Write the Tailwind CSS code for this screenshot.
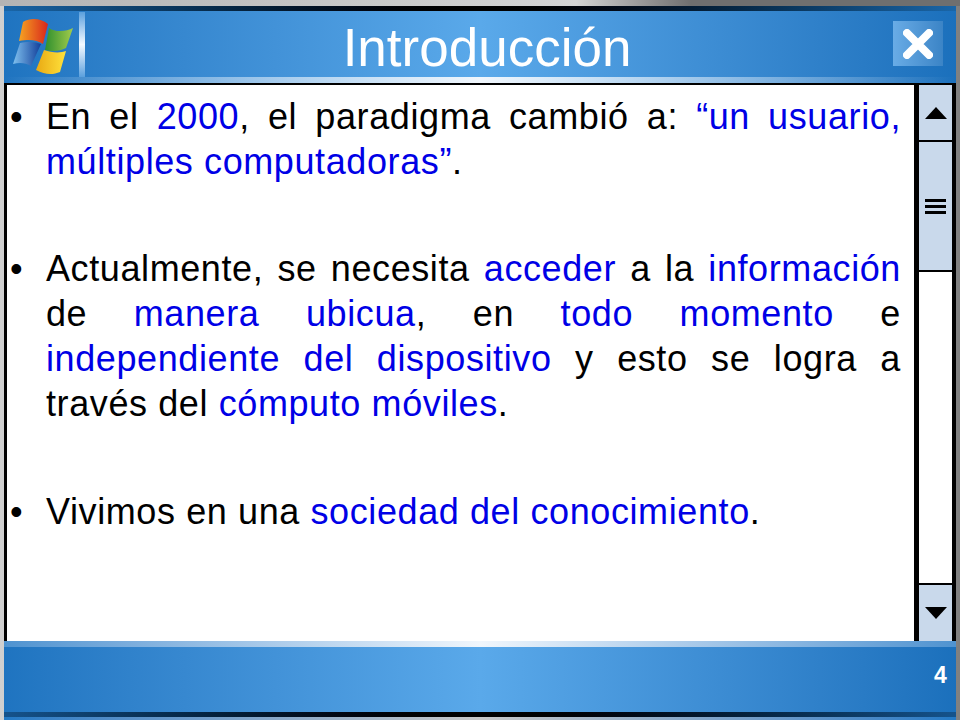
<!DOCTYPE html>
<html><head><meta charset="utf-8"><script src="https://cdn.jsdelivr.net/npm/@tailwindcss/browser@4"></script></head>
<body class="m-0">
<div class="w-[960px] h-[720px] overflow-hidden flex flex-col font-['Liberation_Sans',Arial,sans-serif] bg-gradient-to-r from-[#d0d0d0] to-[#808080] pl-[4px] pr-[4px]">
  <div class="h-[6px] shrink-0 -mx-[4px] bg-gradient-to-r from-[#b4b4b4] via-[#d4d4d4] via-[60%] to-[#6f6f6f] to-[72%]"></div>
  <header class="h-[77px] shrink-0 relative flex items-center justify-center bg-gradient-to-r from-[#1f74c0] via-[#5aa9ea] to-[#1b70bc]">
    <div class="absolute top-0 left-0 right-0 h-[5px] bg-gradient-to-r from-[#1a66a8] via-black to-[#1a66a8]"></div>
    <div class="absolute bottom-0 left-0 right-0 h-[6px] bg-gradient-to-r from-transparent via-[#f0f6fc] to-transparent"></div>
    <svg class="absolute left-[-3px] top-[-3px] overflow-visible" width="80" height="72" viewBox="0 0 80 72">
      <defs>
        <linearGradient id="r" x1="0" y1="0" x2="1" y2="0"><stop offset="0" stop-color="#f6a321"/><stop offset="1" stop-color="#d8261c"/></linearGradient>
        <linearGradient id="g" x1="0" y1="0" x2="1" y2="0"><stop offset="0" stop-color="#2f8f2e"/><stop offset="1" stop-color="#a2cc4c"/></linearGradient>
        <linearGradient id="b" x1="0" y1="0" x2="1" y2="0"><stop offset="0" stop-color="#7fc0ee"/><stop offset="1" stop-color="#123f9a"/></linearGradient>
        <linearGradient id="y" x1="0" y1="0" x2="1" y2="0"><stop offset="0" stop-color="#e9a913"/><stop offset="1" stop-color="#ffe23c"/></linearGradient>
      </defs>
      <path d="M18 14 C27 9 36 11 43 16 L38 36 C32 32 25 31 14 33 Z" transform="translate(4,5)" fill="url(#r)"/>
      <path d="M44 20 C51 25 62 23 68 20 L61 40 C55 43 49 44 40 42 Z" transform="translate(4,5)" fill="url(#g)"/>
      <path d="M15 36 C24 34 31 35 36 37 L26 59 C21 56 15 55 8 57 Z" transform="translate(4,4)" fill="url(#b)"/>
      <path d="M39 43 C47 46 56 46 61 44 L55 65 C48 68 40 68 31 63 Z" transform="translate(4,4)" fill="url(#y)"/>
    </svg>
    <div class="absolute left-[75px] top-[6px] w-[6px] h-[65px] bg-gradient-to-b from-[#5aa0dd] via-[#f4faff] to-[#5aa0dd]"></div>
    <h1 class="text-[53px] leading-none font-normal text-white relative top-[3px] left-[7px]">Introducción</h1>
    <div class="absolute left-[889px] top-[15px] w-[50px] h-[45px] flex items-center justify-center bg-gradient-to-r from-[#69ace6] to-[#3b84c6]">
      <svg width="30" height="30" viewBox="0 0 30 30"><path d="M4 4 L26 26 M26 4 L4 26" stroke="#fff" stroke-width="8" fill="none" stroke-linecap="round"/></svg>
    </div>
  </header>
  <div class="h-[2px] shrink-0 bg-black"></div>
  <main class="flex-1 flex min-h-0">
    <div class="w-[3px] bg-black shrink-0"></div>
    <div class="flex-1 bg-white relative">
      <div class="absolute left-0 top-[9px] w-[894px] text-[36px] leading-[45px] tracking-[0.6px] text-black">
        <div class="flex"><span class="w-[39px] shrink-0 pl-[3px]">•</span><p class="text-justify w-[855px]">En el <span class="text-[#0000e6]">2000</span>, el paradigma cambió a: <span class="text-[#0000e6]">“un usuario, múltiples computadoras”</span>.</p></div>
        <div class="flex mt-[62px]"><span class="w-[39px] shrink-0 pl-[3px]">•</span><p class="text-justify w-[855px]">Actualmente, se necesita <span class="text-[#0000e6]">acceder</span> a la <span class="text-[#0000e6]">información</span> de <span class="text-[#0000e6]">manera ubicua</span>, en <span class="text-[#0000e6]">todo momento</span> e <span class="text-[#0000e6]">independiente del dispositivo</span> y esto se logra a través del <span class="text-[#0000e6]">cómputo móviles</span>.</p></div>
        <div class="flex mt-[63px]"><span class="w-[39px] shrink-0 pl-[3px]">•</span><p class="w-[855px]">Vivimos en una <span class="text-[#0000e6]">sociedad del conocimiento</span>.</p></div>
      </div>
    </div>
    <aside class="w-[42px] shrink-0 flex flex-col border-l-[5px] border-r-[4px] border-black bg-white">
      <div class="h-[57px] bg-[#c9d9eb] flex items-center justify-center border-b-[2px] border-black">
        <svg width="24" height="14" viewBox="0 0 24 14"><path d="M12 1 L23 13 L1 13 Z" fill="#000"/></svg>
      </div>
      <div class="h-[130px] bg-[#c9d9eb] flex flex-col items-center justify-center gap-[3px] border-b-[2px] border-black">
        <div class="w-[21px] h-[3px] bg-black"></div><div class="w-[21px] h-[3px] bg-black"></div><div class="w-[21px] h-[3px] bg-black"></div>
      </div>
      <div class="flex-1"></div>
      <div class="h-[58px] bg-[#c9d9eb] flex items-center justify-center border-t-[2px] border-black">
        <svg width="24" height="14" viewBox="0 0 24 14"><path d="M12 13 L23 1 L1 1 Z" fill="#000"/></svg>
      </div>
    </aside>
  </main>
  <footer class="h-[79px] shrink-0 relative bg-gradient-to-r from-[#1f74c0] via-[#5aa9ea] to-[#1b70bc]">
    <div class="h-[6px] bg-gradient-to-r from-[#4f93d0] via-[#f0f6fc] to-[#4f93d0]"></div>
    <div class="absolute top-[71px] left-0 right-0 h-[5px] bg-gradient-to-r from-[#15538c] via-black to-[#15538c]"></div>
    <div class="absolute top-[76px] left-0 right-0 h-[3px] bg-gradient-to-r from-[#2279c5] via-[#c8c8c8] to-[#2279c5]"></div>
    <span class="absolute left-[930px] top-[22px] text-[23px] leading-[24px] font-bold text-white">4</span>
  </footer>
</div>
</body></html>
